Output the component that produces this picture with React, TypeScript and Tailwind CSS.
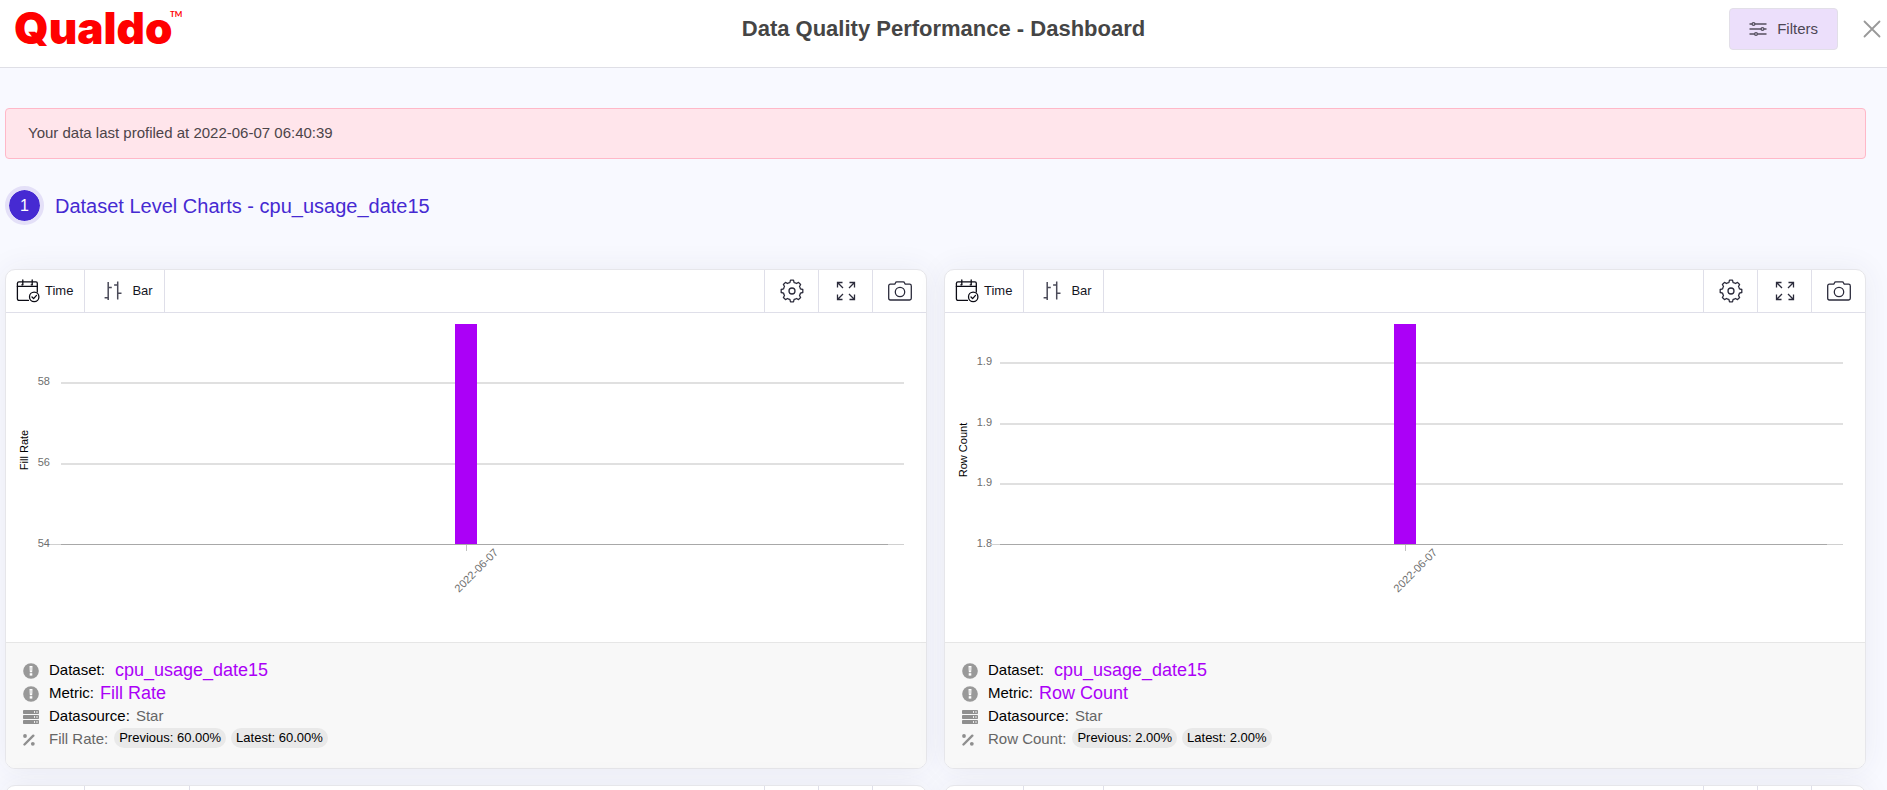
import React from 'react'

type ChartInfo = {
  metric: string
  labelX: number
  ticks: { label: string; y: number }[]
  value: string
}

const charts: ChartInfo[] = [
  {
    metric: 'Fill Rate',
    labelX: 44,
    value: '60.00%',
    ticks: [
      { label: '58', y: 70 },
      { label: '56', y: 151 },
      { label: '54', y: 232 },
    ],
  },
  {
    metric: 'Row Count',
    labelX: 47,
    value: '2.00%',
    ticks: [
      { label: '1.9', y: 50 },
      { label: '1.9', y: 111 },
      { label: '1.9', y: 171 },
      { label: '1.8', y: 232 },
    ],
  },
]

/* ---------- icons ---------- */

const CalendarIcon = () => (
  <svg width="24" height="24" viewBox="0 0 24 24" fill="none" stroke="#0b0b14" strokeWidth="1.3" strokeLinecap="round" strokeLinejoin="round">
    <path d="M12.5 21.4H3a1.6 1.6 0 0 1-1.6-1.6V4.4A1.6 1.6 0 0 1 3 2.9h17a1.3 1.3 0 0 1 1.3 1.3V13" />
    <path d="M1.4 7.4h19.9M6.8 1v4.6M16.2 1v4.6" />
    <path d="M5.8 5.8h1M15.2 5.8h1" />
    <circle cx="18.2" cy="17.9" r="4.7" />
    <path d="M16 18l1.6 1.6 2.9-3.2" />
  </svg>
)

const BarIcon = () => (
  <svg width="18" height="20" viewBox="0 0 18 20" fill="none" stroke="#4a4a58" strokeWidth="1.5">
    <path d="M4.2 1v18M4.2 6.4h3.6M.6 16.8h3.6" />
    <path d="M13.7.4v18M10.1 4h3.6M13.7 12.2h3.8" />
  </svg>
)

const GearIcon = () => (
  <svg width="24" height="24" viewBox="0 0 24 24" fill="none" stroke="#2b2b3b" strokeWidth="1.3" strokeLinejoin="round">
    <path d="M9.9 3.6 10.5 1.2h3l.6 2.4q1.3.2 2.4.9l2-1.1 2.1 2.1-1.1 2q.7 1.1.9 2.4l2.4.6v3l-2.4.6q-.2 1.3-.9 2.4l1.1 2-2.1 2.1-2-1.1q-1.1.7-2.4.9l-.6 2.4h-3l-.6-2.4q-1.3-.2-2.4-.9l-2 1.1-2.1-2.1 1.1-2q-.7-1.1-.9-2.4l-2.4-.6v-3l2.4-.6q.2-1.3.9-2.4l-1.1-2 2.1-2.1 2 1.1q1.1-.7 2.4-.9z" />
    <circle cx="12" cy="12" r="3" />
  </svg>
)

const ExpandIcon = () => (
  <svg width="20" height="20" viewBox="0 0 20 20" fill="none" stroke="#2b2b3b" strokeWidth="1.3">
    <path d="M1.5 6.5v-5h5M1.5 1.5 7 7" />
    <path d="M13.5 1.5h5v5M18.5 1.5 13 7" />
    <path d="M1.5 13.5v5h5M1.5 18.5 7 13" />
    <path d="M13.5 18.5h5v-5M18.5 18.5 13 13" />
  </svg>
)

const CameraIcon = () => (
  <svg width="24" height="20" viewBox="0 0 24 20" fill="none" stroke="#2b2b3b" strokeWidth="1.3" strokeLinejoin="round">
    <path d="M2.4 3.2H6q.9 0 1.2-.8l.3-.7q.3-.9 1.2-.9h6.6q.9 0 1.2.9l.3.7q.3.8 1.2.8h3.6q1.7 0 1.7 1.7v12.4q0 1.7-1.7 1.7H2.4q-1.7 0-1.7-1.7V4.9q0-1.7 1.7-1.7z" />
    <circle cx="12" cy="11" r="4.7" />
  </svg>
)

const FilterIcon = () => (
  <svg width="18" height="16" viewBox="0 0 18 16" stroke="#55505f" strokeWidth="1.3" fill="#ecdffb">
    <path d="M.5 3h17M.5 8h17M.5 13h17" />
    <circle cx="4.5" cy="3" r="1.4" />
    <circle cx="13.5" cy="8" r="1.4" />
    <circle cx="7" cy="13" r="1.4" />
  </svg>
)

const CloseIcon = () => (
  <svg width="18" height="18" viewBox="0 0 18 18" stroke="#999" strokeWidth="1.8" strokeLinecap="round">
    <path d="M1.5 1.5l15 15M16.5 1.5l-15 15" />
  </svg>
)

const InfoIcon = () => (
  <svg width="16" height="16" viewBox="0 0 16 16">
    <circle cx="8" cy="8" r="7.8" fill="#999" />
    <path d="M6.5 3h3l-.3 6.2H6.8z" fill="#fff" />
    <path d="M7.6 4.2h.8v3.6h-.8z" fill="#bbb" />
    <rect x="6.7" y="10.2" width="2.6" height="2.4" fill="#fff" />
  </svg>
)

const ServerIcon = () => (
  <svg width="16" height="14" viewBox="0 0 16 14">
    {[0, 5, 10].map((y) => (
      <g key={y}>
        <rect y={y} width="16" height="4" rx=".8" fill="#8f8f8f" />
        <path d={`M11.5 ${y + 1.2}v1.6M14 ${y + 1.2}v1.6`} stroke="#fff" strokeWidth="1" />
      </g>
    ))}
  </svg>
)

const PercentIcon = () => (
  <svg width="12" height="12" viewBox="0 0 12 12">
    <path d="M1.5 10.5 10.3 1.7" stroke="#8f8f8f" strokeWidth="2.4" strokeLinecap="round" />
    <circle cx="2" cy="2" r="1.9" fill="#8f8f8f" />
    <circle cx="9.8" cy="9.8" r="1.9" fill="#8f8f8f" />
  </svg>
)

/* ---------- card parts ---------- */

const toolButton = 'flex h-full w-[54px] items-center justify-center border-l border-[#dfdfe9]'

const Toolbar = () => (
  <div className="flex h-[43px] items-center border-b border-[#dfdfe9] text-[13px] text-[#15151f]">
    <button className="flex h-full items-center gap-[5px] border-r border-[#dfdfe9] pr-[11px] pl-[10px]">
      <CalendarIcon />
      Time
    </button>
    <button className="flex h-full items-center gap-[10px] border-r border-[#dfdfe9] pr-[11px] pl-[19px]">
      <BarIcon />
      Bar
    </button>
    <div className="ml-auto flex h-full">
      <button className={toolButton} aria-label="Settings"><GearIcon /></button>
      <button className={toolButton} aria-label="Expand"><ExpandIcon /></button>
      <button className={toolButton} aria-label="Snapshot"><CameraIcon /></button>
    </div>
  </div>
)

// cells only, for cards that are still loading
const EmptyToolbar = ({ wide = false }: { wide?: boolean }) => (
  <div className="flex h-[43px] border-b border-[#dfdfe9]">
    <div className="w-[79px] border-r border-[#dfdfe9]" />
    <div className={wide ? 'w-[105px] border-r border-[#dfdfe9]' : 'w-20 border-r border-[#dfdfe9]'} />
    <div className="ml-auto flex">
      <div className={toolButton} />
      <div className={toolButton} />
      <div className={toolButton} />
    </div>
  </div>
)

const Chart = ({ chart }: { chart: ChartInfo }) => (
  <svg className="block w-full" viewBox="0 0 920 329" fontFamily="'Liberation Sans', Arial, sans-serif" fontSize="11">
    {chart.ticks.map((t, i) => (
      <g key={i}>
        {t.y !== 232 && <path d={`M55 ${t.y}h843`} stroke="#e0e0e0" strokeWidth="2" />}
        <text x={chart.labelX} y={t.y + 2} textAnchor="end" fill="#6e6e6e">{t.label}</text>
      </g>
    ))}
    {/* base line */}
    <path d="M44 231.5h854" stroke="#d0d0d0" />
    <path d="M55 231.5h827" stroke="#a8a8a8" />
    <path d="M460.5 232v6" stroke="#c0c0c0" />
    <rect x="449" y="11" width="22" height="220" fill="#ab00f7" />
    <text transform="translate(473 260) rotate(-45)" textAnchor="middle" fill="#6e6e6e">2022-06-07</text>
    <text transform="translate(22 137) rotate(-90)" textAnchor="middle" fill="#000">{chart.metric}</text>
  </svg>
)

const Row = ({ icon, children }: { icon: React.ReactNode; children: React.ReactNode }) => (
  <div className="flex h-[23px] items-center">
    <span className="w-[26px]">{icon}</span>
    {children}
  </div>
)

const Pill = ({ children }: { children: React.ReactNode }) => (
  <span className="mr-[5px] self-start rounded-full bg-[#e9e9e9] px-[5px] text-[13px] leading-5 text-black">{children}</span>
)

const cardClass = 'overflow-hidden rounded-[10px] border border-[#e6e6ea] bg-white shadow-[0_0_30px_rgba(60,60,90,0.07)]'

const Card = ({ chart }: { chart: ChartInfo }) => (
  <section className={cardClass}>
    <Toolbar />
    <Chart chart={chart} />
    <div className="border-t border-[#e6e6e6] bg-[#f8f8f8] px-[17px] pt-4 pb-[17px] text-[15px] text-black">
      <Row icon={<InfoIcon />}>
        <span className="mr-[10px]">Dataset:</span>
        <a href="#" className="text-lg leading-[23px] text-[#ab00f7]">cpu_usage_date15</a>
      </Row>
      <Row icon={<InfoIcon />}>
        <span className="mr-[6px]">Metric:</span>
        <a href="#" className="text-lg leading-[23px] text-[#ab00f7]">{chart.metric}</a>
      </Row>
      <Row icon={<ServerIcon />}>
        <span className="mr-[6px]">Datasource:</span>
        <span className="text-[#666]">Star</span>
      </Row>
      <Row icon={<PercentIcon />}>
        <span className="mr-[6px] text-[#666]">{chart.metric}:</span>
        <Pill>Previous: {chart.value}</Pill>
        <Pill>Latest: {chart.value}</Pill>
      </Row>
    </div>
  </section>
)

const App = () => {
  return (
    <div className="h-screen overflow-hidden bg-[#f8f9ff] font-['Liberation_Sans',Arial,sans-serif]">
      {/* header */}
      <header className="grid h-[68px] grid-cols-[1fr_auto_1fr] items-start border-b border-[#dfdfe6] bg-white">
        <a href="#" aria-label="Qualdo" className="pl-3">
          <svg width="180" height="60" viewBox="0 0 180 60" fill="#f00">
            <text x="2" y="44" fontFamily="Inter, sans-serif" fontWeight="900" fontSize="44">Qualdo</text>
            <text x="158" y="17" fontFamily="Lato, sans-serif" fontWeight="700" fontSize="8">TM</text>
          </svg>
        </a>
        <h1 className="pt-[17px] text-[22px] leading-6 font-bold text-[#454545]">Data Quality Performance - Dashboard</h1>
        <div className="flex items-center justify-end pt-2 pr-[6px]">
          <button className="mr-[25px] flex h-[42px] items-center gap-[10px] rounded border border-[#e2dfe8] bg-[#ecdffb] px-[19px] text-[15px] text-[#4c4654]">
            <FilterIcon />
            Filters
          </button>
          <button aria-label="Close"><CloseIcon /></button>
        </div>
      </header>

      <main className="pt-10 pr-[21px] pl-[5px]">
        <div className="rounded border border-[#ffb8c8] bg-[#ffe5eb] px-[22px] pt-3 pb-[13px] text-[15px] leading-6 text-[#4c4449]">
          Your data last profiled at 2022-06-07 06:40:39
        </div>

        <h2 className="mt-[27px] flex items-center gap-[11px] text-xl text-[#462ad2]">
          <span className="flex h-[39px] w-[39px] items-center justify-center rounded-full border-4 border-[#e4e0f8] bg-[#462ad2] bg-clip-padding text-base text-white">1</span>
          Dataset Level Charts - cpu_usage_date15
        </h2>

        {/* charts */}
        <div className="mt-11 grid grid-cols-2 gap-x-[17px] gap-y-4">
          {charts.map((c) => (
            <Card key={c.metric} chart={c} />
          ))}
          <section className={cardClass}><EmptyToolbar wide /></section>
          <section className={cardClass}><EmptyToolbar /></section>
        </div>
      </main>
    </div>
  )
}

export default App
